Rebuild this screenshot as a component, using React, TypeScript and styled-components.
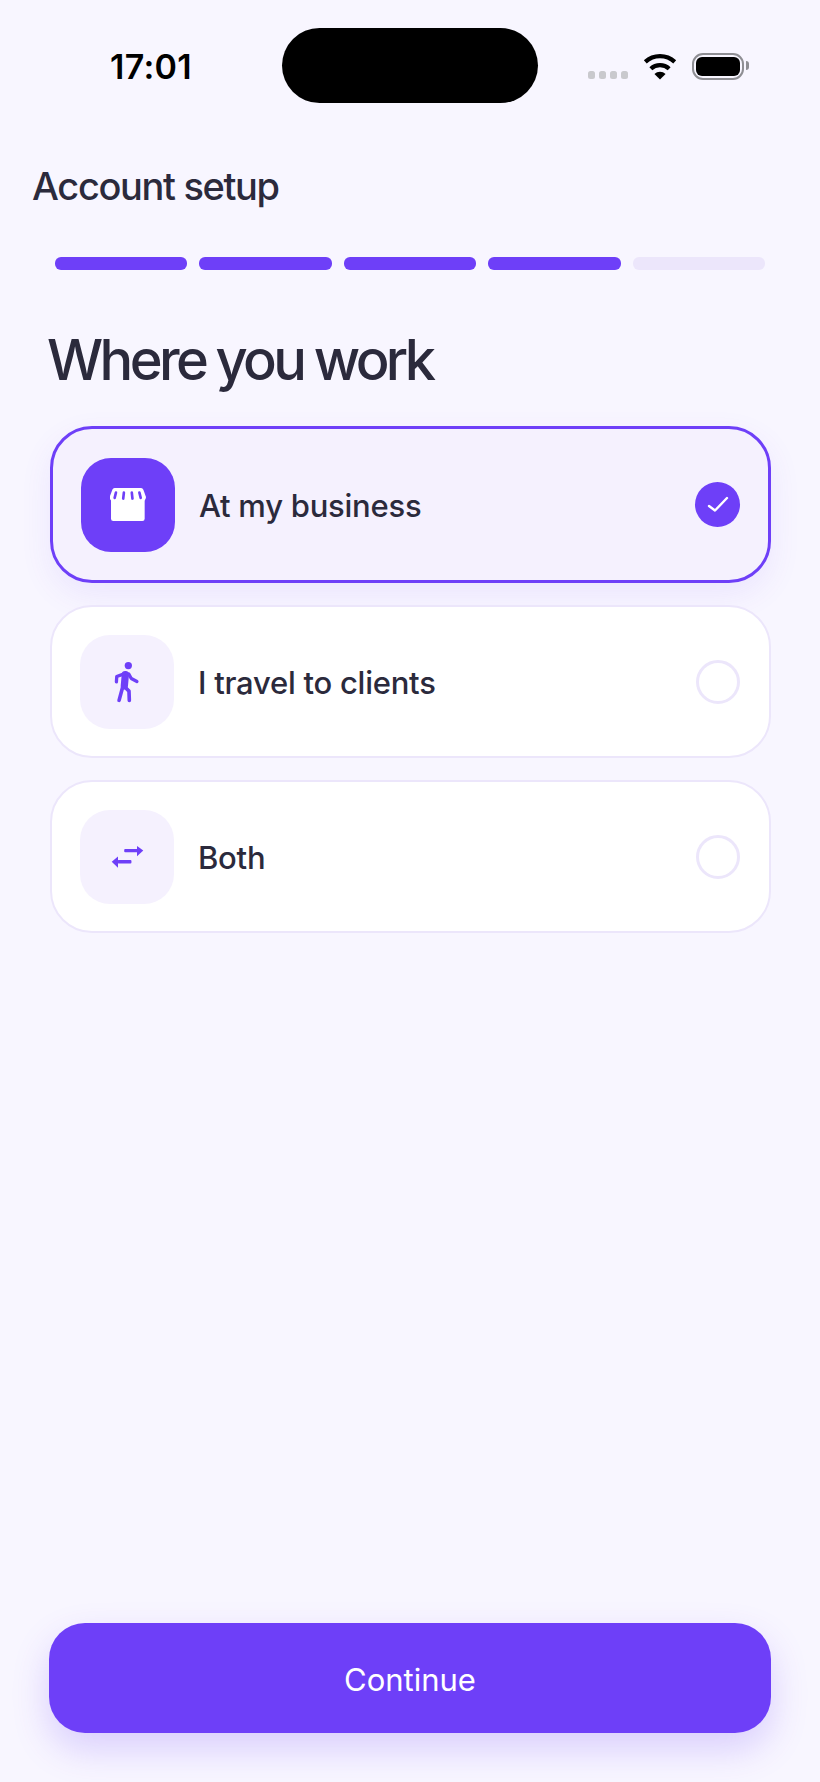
import React from 'react';
import styled, { createGlobalStyle } from 'styled-components';

const GlobalStyle = createGlobalStyle`
  html, body {
    margin: 0;
    padding: 0;
    background: #f8f6ff;
  }
`;

const Page = styled.div`
  width: 820px;
  height: 1782px;
  box-sizing: border-box;
  display: flex;
  flex-direction: column;
  background: #f8f6ff;
  color: #2b2a3c;
  font-family: Inter, "Liberation Sans", sans-serif;
  overflow: hidden;
`;

const StatusBar = styled.div`
  display: grid;
  grid-template-columns: 1fr 256px 1fr;
  height: 75px;
  margin-top: 28px;
`;

const Time = styled.div`
  padding: 18px 0 0 110px;
  font-size: 34px;
  line-height: 41px;
  font-weight: 600;
  letter-spacing: 0.3px;
  color: #000;
`;

const Island = styled.div`
  background: #000;
  border-radius: 38px;
`;

const StatusIcons = styled.div`
  display: flex;
  align-items: flex-start;
  padding: 25px 0 0 50px;
`;

const SignalDots = styled.div`
  display: flex;
  gap: 4px;
  margin-top: 18px;
  margin-right: 15px;
`;

const Dot = styled.span`
  width: 7px;
  height: 8px;
  border-radius: 2.5px;
  background: #c9c9cd;
`;

const Battery = styled.div`
  position: relative;
  box-sizing: border-box;
  width: 52px;
  height: 27px;
  margin-left: 15px;
  padding: 2px;
  border: 2px solid #8e8e93;
  border-radius: 11px;

  &::before {
    content: "";
    display: block;
    height: 100%;
    border-radius: 6px;
    background: #000;
  }

  &::after {
    content: "";
    position: absolute;
    top: 6px;
    right: -7px;
    width: 3px;
    height: 9px;
    border-radius: 0 4px 4px 0;
    background: #8e8e93;
  }
`;

const Heading = styled.div`
  margin: 60px 0 0 32px;
  font-size: 38px;
  line-height: 46px;
  font-weight: 500;
  letter-spacing: -1.35px;
`;

const Progress = styled.div`
  display: flex;
  gap: 12px;
  margin: 48px 55px 0;
`;

const Step = styled.div<{ $done?: boolean }>`
  flex: 1;
  height: 13px;
  border-radius: 6px;
  background: ${p => (p.$done ? '#6e3ff8' : '#ece6fb')};
`;

const Title = styled.h1`
  margin: 56px 0 0 47px;
  font-size: 56px;
  line-height: 68px;
  font-weight: 500;
  letter-spacing: -3.6px;
  word-spacing: -1px;
`;

const Options = styled.div`
  display: flex;
  flex-direction: column;
  gap: 22px;
  margin: 32px 49px 0 50px;
`;

const Card = styled.div<{ $active?: boolean }>`
  box-sizing: border-box;
  height: ${p => (p.$active ? '157px' : '153px')};
  display: flex;
  align-items: center;
  padding: 0 ${p => (p.$active ? '28px' : '29px')} 0 28px;
  border-radius: 42px;
  border: ${p => (p.$active ? '3px solid #6e3ff8' : '2px solid #ece6fb')};
  background: ${p => (p.$active ? '#f5f1fe' : '#fff')};
  box-shadow: ${p => (p.$active ? '0 12px 32px rgba(110, 63, 248, 0.09)' : 'none')};
`;

const IconTile = styled.div<{ $active?: boolean }>`
  width: 94px;
  height: 94px;
  flex: none;
  display: flex;
  align-items: center;
  justify-content: center;
  border-radius: 30px;
  background: ${p => (p.$active ? '#6e3ff8' : '#f5f1fe')};
`;

const Label = styled.div`
  flex: 1;
  margin-left: 24px;
  padding-top: 2px;
  font-size: 31px;
  line-height: 40px;
  font-weight: 450;
  letter-spacing: -0.25px;
`;

const Radio = styled.div<{ $active?: boolean }>`
  box-sizing: border-box;
  width: ${p => (p.$active ? '45px' : '44px')};
  height: ${p => (p.$active ? '45px' : '44px')};
  flex: none;
  display: flex;
  align-items: center;
  justify-content: center;
  border-radius: 50%;
  border: ${p => (p.$active ? 'none' : '3px solid #ece6fb')};
  background: ${p => (p.$active ? '#6e3ff8' : '#fff')};
`;

const Footer = styled.div`
  margin: auto 49px 49px;
`;

const ContinueButton = styled.button`
  width: 100%;
  height: 110px;
  padding: 2px 0 0;
  border: none;
  border-radius: 36px;
  background: #6e3ff8;
  color: #fff;
  font-family: Inter, "Liberation Sans", sans-serif;
  font-size: 31px;
  font-weight: 400;
  box-shadow: 0 16px 36px rgba(110, 63, 248, 0.22);
`;

const WifiIcon = () => (
  <svg width="34" height="27" viewBox="248 98 104 80">
    <path d="M255 124a66 66 0 0 1 90 0" fill="none" stroke="#000" strokeWidth="13" />
    <path d="M272 145a41 41 0 0 1 56 0" fill="none" stroke="#000" strokeWidth="13" />
    <path d="M283 161a24 24 0 0 1 34 0l-17 17z" fill="#000" />
  </svg>
);

const StoreIcon = () => (
  <svg width="37" height="33" viewBox="240 235 112 100">
    <rect x="243" y="262" width="102" height="73" rx="7" fill="#fff" />
    <path d="M254 235h80a8 8 0 0 1 7 5l8 22c0 8-6 14-13 14H252c-7 0-13-6-13-14l8-22a8 8 0 0 1 7-5z" fill="#fff" />
    <g fill="none" stroke="#6e3ff8" strokeWidth="8" strokeLinecap="round">
      <path d="M258 249l-4 16" />
      <path d="M282 249l-2 18" />
      <path d="M306 249l2 18" />
      <path d="M329 249l4 16" />
    </g>
  </svg>
);

const WalkIcon = () => (
  <svg width="30" height="43" viewBox="248 60 90 130">
    <circle cx="297" cy="77" r="11" fill="#6e3ff8" />
    <g fill="none" stroke="#6e3ff8" strokeLinecap="round" strokeLinejoin="round">
      <path d="M288 104l-3 34" strokeWidth="22" />
      <path d="M284 102l-22 8-1 16" strokeWidth="10" />
      <path d="M298 102l8 14 17 9" strokeWidth="10" />
      <path d="M281 138l-12 44" strokeWidth="11" />
      <path d="M285 140l14 14 1 28" strokeWidth="11" />
    </g>
  </svg>
);

const SwapIcon = () => (
  <svg width="33" height="23" viewBox="240 616 100 70">
    <g fill="#6e3ff8">
      <rect x="280" y="628" width="42" height="10" rx="3" />
      <path d="M319 619l19 14-19 17z" />
      <rect x="260" y="662" width="42" height="10" rx="3" />
      <path d="M261 651l-19 16 19 18z" />
    </g>
  </svg>
);

const CheckIcon = () => (
  <svg width="22" height="17" viewBox="0 0 22 17">
    <path d="M2 10l6 4.5L20 2" fill="none" stroke="#fff" strokeWidth="2.4" strokeLinecap="round" strokeLinejoin="round" />
  </svg>
);

const options = [
  { label: 'At my business', icon: <StoreIcon />, active: true },
  { label: 'I travel to clients', icon: <WalkIcon />, active: false },
  { label: 'Both', icon: <SwapIcon />, active: false },
];

const App: React.FC = () => {
  return (
    <Page>
      <GlobalStyle />
      <StatusBar>
        <Time>17:01</Time>
        <Island />
        <StatusIcons>
          <SignalDots>
            <Dot />
            <Dot />
            <Dot />
            <Dot />
          </SignalDots>
          <WifiIcon />
          <Battery />
        </StatusIcons>
      </StatusBar>
      <Heading>Account setup</Heading>
      <Progress>
        <Step $done />
        <Step $done />
        <Step $done />
        <Step $done />
        <Step />
      </Progress>
      <Title>Where you work</Title>
      <Options>
        {options.map(o => (
          <Card key={o.label} $active={o.active}>
            <IconTile $active={o.active}>{o.icon}</IconTile>
            <Label>{o.label}</Label>
            <Radio $active={o.active}>{o.active && <CheckIcon />}</Radio>
          </Card>
        ))}
      </Options>
      <Footer>
        <ContinueButton>Continue</ContinueButton>
      </Footer>
    </Page>
  );
};

export default App;
